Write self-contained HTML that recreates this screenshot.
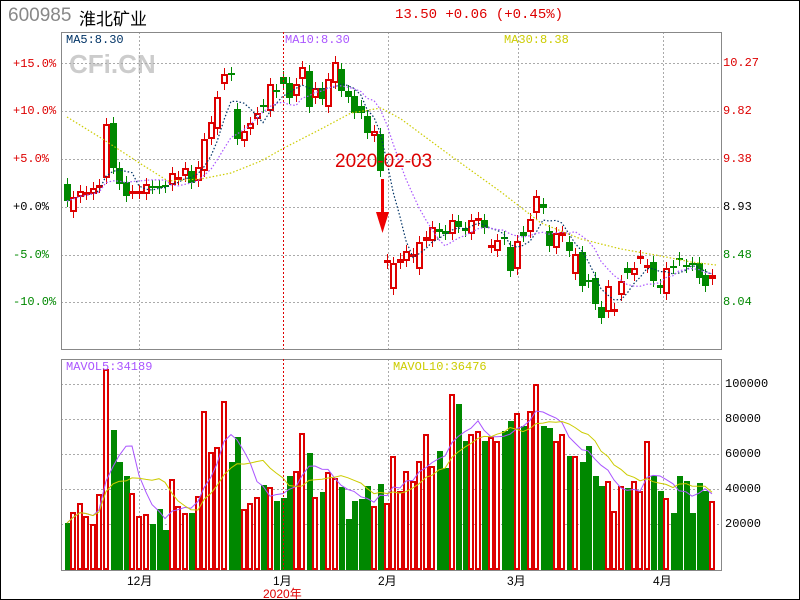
<!DOCTYPE html>
<html><head><meta charset="utf-8"><style>
html,body{margin:0;padding:0;background:#fff;}
#w{position:relative;width:798px;height:598px;border:1px solid #000;overflow:hidden;font-family:"Liberation Mono","Noto Sans CJK SC",monospace;}
.t{position:absolute;white-space:nowrap;font-size:12px;}
</style></head><body><div id="w">
<div class="t" style="left:7px;top:4px;font-size:19px;color:#888;font-family:'Liberation Sans',sans-serif;">600985</div>
<div class="t" style="left:78px;top:4px;font-size:17px;color:#000;font-family:'Liberation Sans','Noto Sans CJK SC',sans-serif;">淮北矿业</div>
<div class="t" style="left:394px;top:6px;font-size:14px;color:#d00;">13.50 +0.06 (+0.45%)</div>
<div class="t" style="left:68px;top:48px;font-size:26px;font-weight:bold;color:#ccc;font-family:'Liberation Sans',sans-serif;">CFi.CN</div>
<svg id="s" width="798" height="598" style="position:absolute;left:0;top:0"></svg>
<div class="t" style="left:65px;top:32px;color:#036;">MA5:8.30</div>
<div class="t" style="left:284px;top:32px;color:#a5f;">MA10:8.30</div>
<div class="t" style="left:503px;top:32px;color:#cc0;">MA30:8.38</div>
<div class="t" style="left:12px;top:56px;color:#d00;">+15.0%</div>
<div class="t" style="left:12px;top:103px;color:#d00;">+10.0%</div>
<div class="t" style="left:12px;top:151px;color:#d00;">+5.0%</div>
<div class="t" style="left:12px;top:199px;color:#000;">+0.0%</div>
<div class="t" style="left:12px;top:247px;color:#080;">-5.0%</div>
<div class="t" style="left:12px;top:294px;color:#080;">-10.0%</div>
<div class="t" style="left:722px;top:55px;color:#d00;">10.27</div>
<div class="t" style="left:722px;top:103px;color:#d00;">9.82</div>
<div class="t" style="left:722px;top:151px;color:#d00;">9.38</div>
<div class="t" style="left:722px;top:199px;color:#000;">8.93</div>
<div class="t" style="left:722px;top:247px;color:#080;">8.48</div>
<div class="t" style="left:722px;top:294px;color:#080;">8.04</div>
<div class="t" style="left:334px;top:150px;font-size:19px;color:#d00;font-family:'Liberation Sans',sans-serif;">2020-02-03</div>
<div class="t" style="left:65px;top:359px;color:#a5f;">MAVOL5:34189</div>
<div class="t" style="left:392px;top:359px;color:#cc0;">MAVOL10:36476</div>
<div class="t" style="left:724px;top:376px;color:#000;">100000</div>
<div class="t" style="left:724px;top:411px;color:#000;">80000</div>
<div class="t" style="left:724px;top:446px;color:#000;">60000</div>
<div class="t" style="left:724px;top:481px;color:#000;">40000</div>
<div class="t" style="left:724px;top:516px;color:#000;">20000</div>
<div class="t" style="left:126px;top:571px;color:#000;font-family:'Liberation Sans','Noto Sans CJK SC',sans-serif;">12月</div>
<div class="t" style="left:272px;top:571px;color:#000;font-family:'Liberation Sans','Noto Sans CJK SC',sans-serif;">1月</div>
<div class="t" style="left:377px;top:571px;color:#000;font-family:'Liberation Sans','Noto Sans CJK SC',sans-serif;">2月</div>
<div class="t" style="left:506px;top:571px;color:#000;font-family:'Liberation Sans','Noto Sans CJK SC',sans-serif;">3月</div>
<div class="t" style="left:652px;top:571px;color:#000;font-family:'Liberation Sans','Noto Sans CJK SC',sans-serif;">4月</div>
<div class="t" style="left:262px;top:584px;color:#d00;font-family:'Liberation Sans','Noto Sans CJK SC',sans-serif;">2020年</div>
</div>
<script>
var D=[[66,183,200,0,522],[72,196,211,1,511],[79,190,196,1,502],[85,191,193,1,515],[92,187,193,1,523],[98,184,186,1,493],[105,123,177,1,368],[112,122,167,0,429],[118,167,183,0,461],[125,181,195,0,475],[131,190,192,1,492],[138,190,192,1,515],[145,183,193,1,513],[151,185,187,0,523],[158,185,187,0,508],[164,184,186,0,529],[171,172,184,1,478],[177,176,178,1,505],[184,167,175,1,512],[190,170,182,0,512],[197,166,180,1,495],[203,138,170,1,410],[210,121,138,1,451],[216,96,128,1,446],[223,73,83,1,400],[230,72,74,0,461],[236,108,138,0,436],[243,130,140,1,508],[249,122,128,1,502],[256,112,118,1,496],[262,104,106,0,484],[269,83,110,1,486],[275,89,91,0,500],[282,76,83,0,497],[288,82,97,0,475],[295,83,95,1,470],[301,66,78,1,432],[308,70,106,0,452],[314,87,97,1,496],[321,87,98,0,491],[327,78,106,1,471],[334,61,82,1,477],[340,68,90,0,486],[347,90,96,0,518],[353,95,112,0,500],[360,105,112,0,498],[366,115,132,0,485],[373,130,135,1,505],[379,133,170,0,483],[386,259,262,1,502],[392,262,288,1,455],[399,258,262,1,490],[405,250,260,1,470],[412,253,256,1,480],[418,241,268,1,460],[425,236,240,1,433],[431,226,240,1,465],[438,228,231,0,450],[444,230,233,0,467],[451,219,233,1,393],[457,220,226,0,403],[464,227,230,0,440],[470,219,233,1,433],[477,217,219,1,430],[483,219,227,0,440],[490,244,246,1,436],[496,239,250,1,440],[503,236,238,0,430],[509,246,270,0,420],[516,240,268,1,412],[522,231,235,0,425],[529,218,231,1,410],[535,195,212,1,383],[542,203,207,0,425],[548,230,245,0,427],[555,232,247,1,440],[561,231,235,1,433],[568,241,250,0,455],[574,253,273,1,455],[581,251,285,0,461],[587,279,281,0,445],[594,277,303,0,475],[600,306,317,0,485],[607,285,311,1,480],[613,308,309,1,510],[620,280,294,1,485],[626,267,272,0,487],[633,267,274,1,480],[639,255,257,1,490],[646,264,266,1,440],[652,261,280,0,475],[659,284,287,0,490],[665,267,293,1,497],[672,265,267,0,512],[678,257,259,0,475],[685,264,266,0,480],[691,262,264,0,512],[698,262,277,0,482],[704,274,285,0,490],[711,274,278,1,500]];
var S='',R='#d00',G='#080';
function L(x1,y1,x2,y2,c,d){S+='<line x1="'+x1+'" y1="'+y1+'" x2="'+x2+'" y2="'+y2+'" stroke="'+c+'" stroke-width="1"'+(d?' stroke-dasharray="'+d+'"':'')+' shape-rendering="crispEdges"/>';}
[62,110,158,206,254,301].forEach(function(y){L(60,y+.5,720,y+.5,'#aaa','2,2');});
[383,418,453,488,523].forEach(function(y){L(60,y+.5,720,y+.5,'#aaa','2,2');});
[138,387,517,662].forEach(function(x){L(x+.5,31,x+.5,348,'#aaa','2,2');L(x+.5,358,x+.5,569,'#aaa','2,2');});
S+='<rect x="60.5" y="31.5" width="660" height="317" fill="none" stroke="#888"/>';
S+='<rect x="60.5" y="358.5" width="660" height="211" fill="none" stroke="#888"/>';
var cl=[],vv=[];
D.forEach(function(d){var x=d[0],c=d[3]?R:G,h=Math.max(2,d[2]-d[1]);
L(x+.5,d[1]-6,x+.5,d[2]+6,c);
if(d[3])S+='<rect x="'+(x-2)+'" y="'+(d[1]+1)+'" width="5" height="'+Math.max(1,h-2)+'" fill="#fff" stroke="'+c+'" stroke-width="2" shape-rendering="crispEdges"/>';
else S+='<rect x="'+(x-3)+'" y="'+d[1]+'" width="7" height="'+h+'" fill="'+c+'"/>';
if(d[3])S+='<rect x="'+(x-2)+'" y="'+(d[4]+1)+'" width="4" height="'+(567-d[4])+'" fill="#fff" stroke="'+c+'" stroke-width="2" shape-rendering="crispEdges"/>';
else S+='<rect x="'+(x-2)+'" y="'+d[4]+'" width="6" height="'+(569-d[4])+'" fill="'+c+'"/>';
cl.push(d[3]?d[1]:d[2]);vv.push(d[4]);});
function ma(a,n,c,dash,w){var p=[];for(var i=0;i<a.length;i++){var s=0,k=0;for(var j=Math.max(0,i-n+1);j<=i;j++){s+=a[j];k++;}p.push(D[i][0]+','+(s/k).toFixed(1));}
S+='<polyline points="'+p.join(' ')+'" fill="none" stroke="'+c+'" stroke-width="'+(w||1)+'"'+(dash?' stroke-dasharray="'+dash+'"':'')+'/>';}
ma(cl,5,'#036','1.5,2',1.2);ma(cl,10,'#a5f','1.5,2',1.2);
S+='<polyline points="66,116 100,137 140,163 167,180 200,178 230,172 260,160 283,147 320,128 350,112 380,107 400,118 450,155 500,191 540,222 580,238 620,248 660,255 690,261 715,264" fill="none" stroke="#cc0" stroke-width="1.2" stroke-dasharray="1.5,2"/>';
ma(vv,5,'#a5f');ma(vv,10,'#cc0');
L(282.5,31,282.5,348,R,'2,2');L(282.5,358,282.5,569,R,'2,2');
S+='<rect x="380" y="178" width="3" height="34" fill="#e00"/><polygon points="375,211 388,211 381.5,232" fill="#e00"/>';
document.getElementById('s').innerHTML=S;
</script>
</body></html>
